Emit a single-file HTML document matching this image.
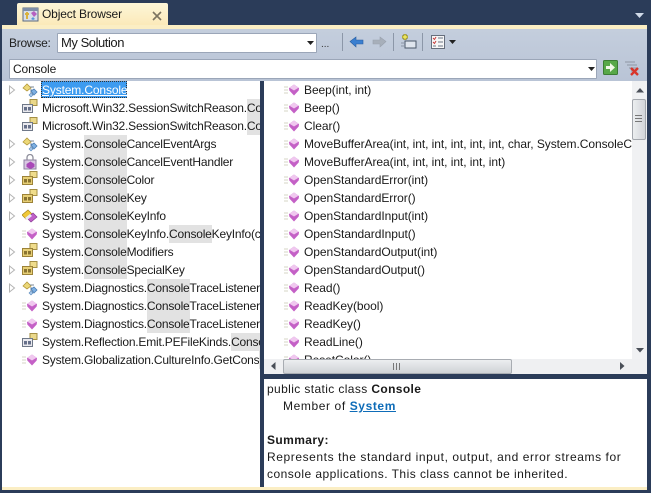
<!DOCTYPE html>
<html><head><meta charset="utf-8">
<style>
html,body{margin:0;padding:0}
body{width:651px;height:493px;overflow:hidden;position:relative;background:#2b3c59;font-family:"Liberation Sans",sans-serif;font-size:12px;color:#1a1a1a}
.a{position:absolute}
.t{position:absolute;left:42px;height:18px;line-height:18px;white-space:nowrap;letter-spacing:-.2px}
.t b{font-weight:normal;background:#e2e2e2;display:inline-block;height:18px}
.m{position:absolute;height:18px;line-height:18px;white-space:nowrap;letter-spacing:-.06px}
svg.i{position:absolute;width:16px;height:16px}
.d{position:absolute;left:267px;height:17px;line-height:17px;white-space:nowrap;font-size:12px}
</style></head><body>
<svg width="0" height="0" style="position:absolute"><defs>
<symbol id="cl" viewBox="0 0 16 16"><path d="M1 6 5 2l4 4-4 3z" fill="#ecd878" stroke="#b59a3c" stroke-width=".8"/><path d="M8 5h4M9 7v5h2" fill="none" stroke="#7a8796"/><path d="M9 9l3-2 3 3-3 3z" fill="#7fb0e2" stroke="#4a7fb5" stroke-width=".8"/><path d="M7 13l2-2 2 2-2 2z" fill="#a8c8ea" stroke="#5a8abc" stroke-width=".6"/></symbol>
<symbol id="en" viewBox="0 0 16 16"><rect x="8" y="0.500" width="7" height="6" fill="#ead88a" stroke="#a48f45"/><rect x="0.500" y="5.500" width="10" height="8" fill="#e9e9ee" stroke="#6f7888"/><rect x="2" y="8" width="3" height="3.500" fill="#66708a"/><rect x="6" y="8" width="3" height="3.500" fill="#66708a"/></symbol>
<symbol id="ey" viewBox="0 0 16 16"><rect x="8" y="0.500" width="7" height="6" fill="#efdc8b" stroke="#a48f45"/><rect x="0.500" y="5.500" width="10" height="8" fill="#e7cf76" stroke="#9c8238"/><rect x="2" y="8" width="3" height="3.500" fill="#8a7430"/><rect x="6" y="8" width="3" height="3.500" fill="#8a7430"/></symbol>
<symbol id="me" viewBox="0 0 16 16"><path d="M0 5h4M0 8h4M0 11h4" stroke="#d4d4c4" stroke-width="1"/><path d="M10 2.500l5 3.500-.3 2.500L10 13.500 5.300 8.500 5 6z" fill="#c460c6"/><path d="M5.500 5.700L10 2.500l4.500 3.200L10 8.500z" fill="#f0c8ef"/></symbol>
<symbol id="de" viewBox="0 0 16 16"><rect x="2" y="6" width="12" height="9" fill="#d9c7e2" stroke="#8d80a0"/><path d="M5 6V3.500a3 3 0 0 1 6 0V6" fill="none" stroke="#8f8f9c" stroke-width="1.300"/><path d="M8.500 7.500l4 2.500v3l-4 2-4-2v-3z" fill="#a948b8"/></symbol>
<symbol id="st" viewBox="0 0 16 16"><path d="M0 7l6-5 4 4-6 5z" fill="#f0c838" stroke="#a88820" stroke-width=".7"/><path d="M5 10l6-5 4 4-6 5z" fill="#c060c8" stroke="#8a3c96" stroke-width=".7"/><path d="M3 10l5-4 2 2-5 4z" fill="#e8e8f4"/></symbol>
</defs></svg>

<!-- tab -->
<div class="a" style="left:17px;top:3px;width:151px;height:23px;background:linear-gradient(#fdf6d8,#fbe9b8);border-radius:2px 2px 0 0"></div>
<svg class="a" style="left:22px;top:6px" width="17" height="16" viewBox="0 0 17 16"><rect x="1" y="2" width="15" height="13" fill="#d8dfe8" stroke="#5b6a80"/><rect x="1" y="2" width="15" height="3" fill="#7e8ea8"/><path d="M3 8h4M5 6v7" stroke="#d9b23c" stroke-width="2"/><path d="M9 7l3-2 3 3-3 3z" fill="#b660c0"/><path d="M9 13l2-2 2 2-2 1z" fill="#5a96d8"/></svg>
<div class="a" style="left:42px;top:5px;height:18px;line-height:18px;letter-spacing:-.15px;white-space:nowrap">Object Browser</div>
<svg class="a" style="left:152px;top:11px" width="11" height="10"><path d="M1 1l8 8M9 1l-8 8" stroke="#7c7460" stroke-width="1.600"/></svg>
<svg class="a" style="left:635px;top:13px" width="10" height="6"><path d="M0 0h9L4.500 5z" fill="#d0dae8"/></svg>

<!-- panel -->
<div class="a" style="left:2px;top:25px;width:645px;height:4px;background:#fbeec4"></div>
<div class="a" style="left:2px;top:29px;width:645px;height:52px;background:linear-gradient(#c4cedd,#b9c4d6)"></div>
<div class="a" style="left:9px;top:34px;height:18px;line-height:18px;color:#222;letter-spacing:-.25px">Browse:</div>
<div class="a" style="left:57px;top:33px;width:258px;height:18px;background:#fff;border:1px solid #9ba6b8;border-radius:1px;line-height:18px;font-size:13px"><span style="margin-left:3px;letter-spacing:-.45px">My Solution</span></div>
<svg class="a" style="left:307px;top:41px" width="7" height="4"><path d="M0 0h7L3.500 4z" fill="#222"/></svg>
<div class="a" style="left:321px;top:38px;height:14px;line-height:14px;font-size:10px;color:#333">...</div>
<div class="a" style="left:342px;top:33px;width:1px;height:18px;background:#8c97a8"></div>
<svg class="a" style="left:349px;top:35px" width="15" height="13"><path d="M1 6.500 7 2v3h7v4H7v3z" fill="#3a7fd0" stroke="#2a5ea0" stroke-width=".6"/></svg>
<svg class="a" style="left:372px;top:35px" width="15" height="13"><path d="M14 6.500 8 2v3H1v4h7v3z" fill="#a7afba" stroke="#99a1ad" stroke-width=".6"/></svg>
<div class="a" style="left:393px;top:33px;width:1px;height:18px;background:#8c97a8"></div>
<svg class="a" style="left:400px;top:33px" width="17" height="16"><rect x="5" y="8" width="11" height="7" fill="#dfe5ee" stroke="#4a5668"/><path d="M2 4h6M5 1v6" stroke="#8a8420" stroke-width="3"/><path d="M2.500 4h5M5 1.500v5" stroke="#f6ee60" stroke-width="1.400"/><path d="M1 10h3M1 13h3" stroke="#8a94a4"/></svg>
<div class="a" style="left:422px;top:33px;width:1px;height:18px;background:#8c97a8"></div>
<svg class="a" style="left:431px;top:35px" width="15" height="14"><rect x=".5" y=".5" width="13" height="13" fill="#f6f6f6" stroke="#666e7c"/><path d="M2 3l1.500 1.500L5 2M2 7l1.500 1.500L5 6" stroke="#c83a3a" fill="none"/><path d="M7 3h5M7 7h5M7 11h5M2 11h3" stroke="#6c7686"/></svg>
<svg class="a" style="left:449px;top:40px" width="7" height="4"><path d="M0 0h7L3.500 4z" fill="#222"/></svg>

<div class="a" style="left:9px;top:59px;width:586px;height:18px;background:#fff;border:1px solid #9ba6b8;border-radius:1px;line-height:18px"><span style="margin-left:3px;letter-spacing:-.13px">Console</span></div>
<svg class="a" style="left:588px;top:67px" width="7" height="4"><path d="M0 0h7L3.500 4z" fill="#222"/></svg>
<svg class="a" style="left:603px;top:60px" width="15" height="15"><rect x=".5" y=".5" width="14" height="14" rx="1" fill="#58a848" stroke="#3c7c34"/><path d="M3 6h4V3l5 4.500L7 12V9H3z" fill="#f2f8e8"/></svg>
<svg class="a" style="left:624px;top:60px" width="17" height="17"><path d="M1 2h10M3 5h10M5 8h8M7 11h4" stroke="#8e97a4"/><path d="M7 8l7 7M14 8l-7 7" stroke="#d8352a" stroke-width="2.400"/></svg>

<!-- left pane -->
<div class="a" style="left:2px;top:81px;width:258px;height:406px;background:#fff;overflow:hidden"></div>
<div class="a" id="L" style="left:0;top:81px;width:260px;height:406px;overflow:hidden">
 <div class="a" style="left:41px;top:0;width:86px;height:17px;background:#3d9bf0;outline:1px dotted #333;outline-offset:-1px"></div>
 <div class="t" style="top:0;color:#fff;text-decoration:underline;letter-spacing:-.14px">System.Console</div>
 <div class="t" style="top:18px">Microsoft.Win32.SessionSwitchReason.<b>Console</b></div>
 <div class="t" style="top:36px">Microsoft.Win32.SessionSwitchReason.<b>Console</b></div>
 <div class="t" style="top:54px">System.<b>Console</b>CancelEventArgs</div>
 <div class="t" style="top:72px">System.<b>Console</b>CancelEventHandler</div>
 <div class="t" style="top:90px">System.<b>Console</b>Color</div>
 <div class="t" style="top:108px">System.<b>Console</b>Key</div>
 <div class="t" style="top:126px">System.<b>Console</b>KeyInfo</div>
 <div class="t" style="top:144px">System.<b>Console</b>KeyInfo.<b>Console</b>KeyInfo(char, System.ConsoleKey)</div>
 <div class="t" style="top:162px">System.<b>Console</b>Modifiers</div>
 <div class="t" style="top:180px">System.<b>Console</b>SpecialKey</div>
 <div class="t" style="top:198px">System.Diagnostics.<b>Console</b>TraceListener</div>
 <div class="t" style="top:216px">System.Diagnostics.<b>Console</b>TraceListener.Console</div>
 <div class="t" style="top:234px">System.Diagnostics.<b>Console</b>TraceListener.Console</div>
 <div class="t" style="top:252px">System.Reflection.Emit.PEFileKinds.<b>Console</b>Application</div>
 <div class="t" style="top:270px">System.Globalization.CultureInfo.GetCons<b>ole</b></div>

 <svg class="i" style="left:22px;top:1px"><use href="#cl"/></svg>
 <svg class="i" style="left:22px;top:18px"><use href="#en"/></svg>
 <svg class="i" style="left:22px;top:36px"><use href="#en"/></svg>
 <svg class="i" style="left:22px;top:55px"><use href="#cl"/></svg>
 <svg class="i" style="left:22px;top:73px"><use href="#de"/></svg>
 <svg class="i" style="left:22px;top:90px"><use href="#ey"/></svg>
 <svg class="i" style="left:22px;top:108px"><use href="#ey"/></svg>
 <svg class="i" style="left:22px;top:127px"><use href="#st"/></svg>
 <svg class="i" style="left:22px;top:145px"><use href="#me"/></svg>
 <svg class="i" style="left:22px;top:162px"><use href="#ey"/></svg>
 <svg class="i" style="left:22px;top:180px"><use href="#ey"/></svg>
 <svg class="i" style="left:22px;top:199px"><use href="#cl"/></svg>
 <svg class="i" style="left:22px;top:217px"><use href="#me"/></svg>
 <svg class="i" style="left:22px;top:235px"><use href="#me"/></svg>
 <svg class="i" style="left:22px;top:252px"><use href="#en"/></svg>
 <svg class="i" style="left:22px;top:271px"><use href="#me"/></svg>

 <svg class="a" style="left:8px;top:0" width="10" height="216" fill="#fff" stroke="#b4b4b4">
  <path d="M1.500 5v8l5-4zM1.500 59v8l5-4zM1.500 77v8l5-4zM1.500 95v8l5-4zM1.500 113v8l5-4zM1.500 131v8l5-4zM1.500 167v8l5-4zM1.500 185v8l5-4zM1.500 203v8l5-4z"/>
 </svg>
</div>

<!-- splitter -->
<div class="a" style="left:260px;top:81px;width:4px;height:406px;background:#2b3c59"></div>

<!-- right pane -->
<div class="a" style="left:264px;top:81px;width:368px;height:278px;background:#fff;overflow:hidden">
 <svg class="i" style="left:20px;top:1px"><use href="#me"/></svg><svg class="i" style="left:20px;top:19px"><use href="#me"/></svg>
 <svg class="i" style="left:20px;top:37px"><use href="#me"/></svg><svg class="i" style="left:20px;top:55px"><use href="#me"/></svg>
 <svg class="i" style="left:20px;top:73px"><use href="#me"/></svg><svg class="i" style="left:20px;top:91px"><use href="#me"/></svg>
 <svg class="i" style="left:20px;top:109px"><use href="#me"/></svg><svg class="i" style="left:20px;top:127px"><use href="#me"/></svg>
 <svg class="i" style="left:20px;top:145px"><use href="#me"/></svg><svg class="i" style="left:20px;top:163px"><use href="#me"/></svg>
 <svg class="i" style="left:20px;top:181px"><use href="#me"/></svg><svg class="i" style="left:20px;top:199px"><use href="#me"/></svg>
 <svg class="i" style="left:20px;top:217px"><use href="#me"/></svg><svg class="i" style="left:20px;top:235px"><use href="#me"/></svg>
 <svg class="i" style="left:20px;top:253px"><use href="#me"/></svg><svg class="i" style="left:20px;top:271px"><use href="#me"/></svg>
 <div class="m" style="left:40px;top:0">Beep(int, int)</div>
 <div class="m" style="left:40px;top:18px">Beep()</div>
 <div class="m" style="left:40px;top:36px">Clear()</div>
 <div class="m" style="left:40px;top:54px">MoveBufferArea(int, int, int, int, int, int, char, System.ConsoleColor, System.ConsoleColor)</div>
 <div class="m" style="left:40px;top:72px">MoveBufferArea(int, int, int, int, int, int)</div>
 <div class="m" style="left:40px;top:90px">OpenStandardError(int)</div>
 <div class="m" style="left:40px;top:108px">OpenStandardError()</div>
 <div class="m" style="left:40px;top:126px">OpenStandardInput(int)</div>
 <div class="m" style="left:40px;top:144px">OpenStandardInput()</div>
 <div class="m" style="left:40px;top:162px">OpenStandardOutput(int)</div>
 <div class="m" style="left:40px;top:180px">OpenStandardOutput()</div>
 <div class="m" style="left:40px;top:198px">Read()</div>
 <div class="m" style="left:40px;top:216px">ReadKey(bool)</div>
 <div class="m" style="left:40px;top:234px">ReadKey()</div>
 <div class="m" style="left:40px;top:252px">ReadLine()</div>
 <div class="m" style="left:40px;top:270px">ResetColor()</div>
</div>

<!-- v scrollbar -->
<div class="a" style="left:632px;top:81px;width:15px;height:278px;background:#f0f1f3"></div>
<svg class="a" style="left:636px;top:88px" width="8" height="5"><path d="M0 4.500L4 0l4 4.500z" fill="#4a4f58"/></svg>
<div class="a" style="left:632px;top:99px;width:12px;height:39px;background:linear-gradient(90deg,#eceef0,#d2d5d9);border:1px solid #a3a7ad;border-radius:2px"></div>
<svg class="a" style="left:634px;top:114px" width="10" height="9"><path d="M1 1.500h7M1 4.500h7M1 7.500h7" stroke="#777"/></svg>
<svg class="a" style="left:636px;top:348px" width="8" height="5"><path d="M0 0h8L4 4.500z" fill="#4a4f58"/></svg>

<!-- h scrollbar -->
<div class="a" style="left:264px;top:359px;width:383px;height:15px;background:#eff0f2"></div>
<svg class="a" style="left:271px;top:362px" width="5" height="9"><path d="M4.500 0v8L0 4z" fill="#4a4f58"/></svg>
<div class="a" style="left:283px;top:359px;width:227px;height:13px;background:linear-gradient(#eceef0,#cfd2d6);border:1px solid #a8acb2;border-radius:2px"></div>
<svg class="a" style="left:392px;top:362px" width="9" height="9"><path d="M1.500 1v7M4.500 1v7M7.500 1v7" stroke="#777"/></svg>
<svg class="a" style="left:620px;top:362px" width="5" height="9"><path d="M0 0v8l4.500-4z" fill="#4a4f58"/></svg>

<!-- description -->
<div class="a" style="left:264px;top:374px;width:383px;height:5px;background:#2b3c59"></div>
<div class="a" style="left:264px;top:379px;width:383px;height:108px;background:#fff"></div>
<div class="d" style="top:381px;letter-spacing:.38px">public static class <strong>Console</strong></div>
<div class="d" style="left:283px;top:398px;letter-spacing:.6px">Member of <a style="color:#0e6cb8;font-weight:bold;text-decoration:underline">System</a></div>
<div class="d" style="top:432px;font-weight:bold;letter-spacing:.4px">Summary:</div>
<div class="d" style="top:449px;letter-spacing:.58px">Represents the standard input, output, and error streams for</div>
<div class="d" style="top:466px;letter-spacing:.46px">console applications. This class cannot be inherited.</div>

<div class="a" style="left:2px;top:487px;width:645px;height:3px;background:#fbeec4"></div>
</body></html>
